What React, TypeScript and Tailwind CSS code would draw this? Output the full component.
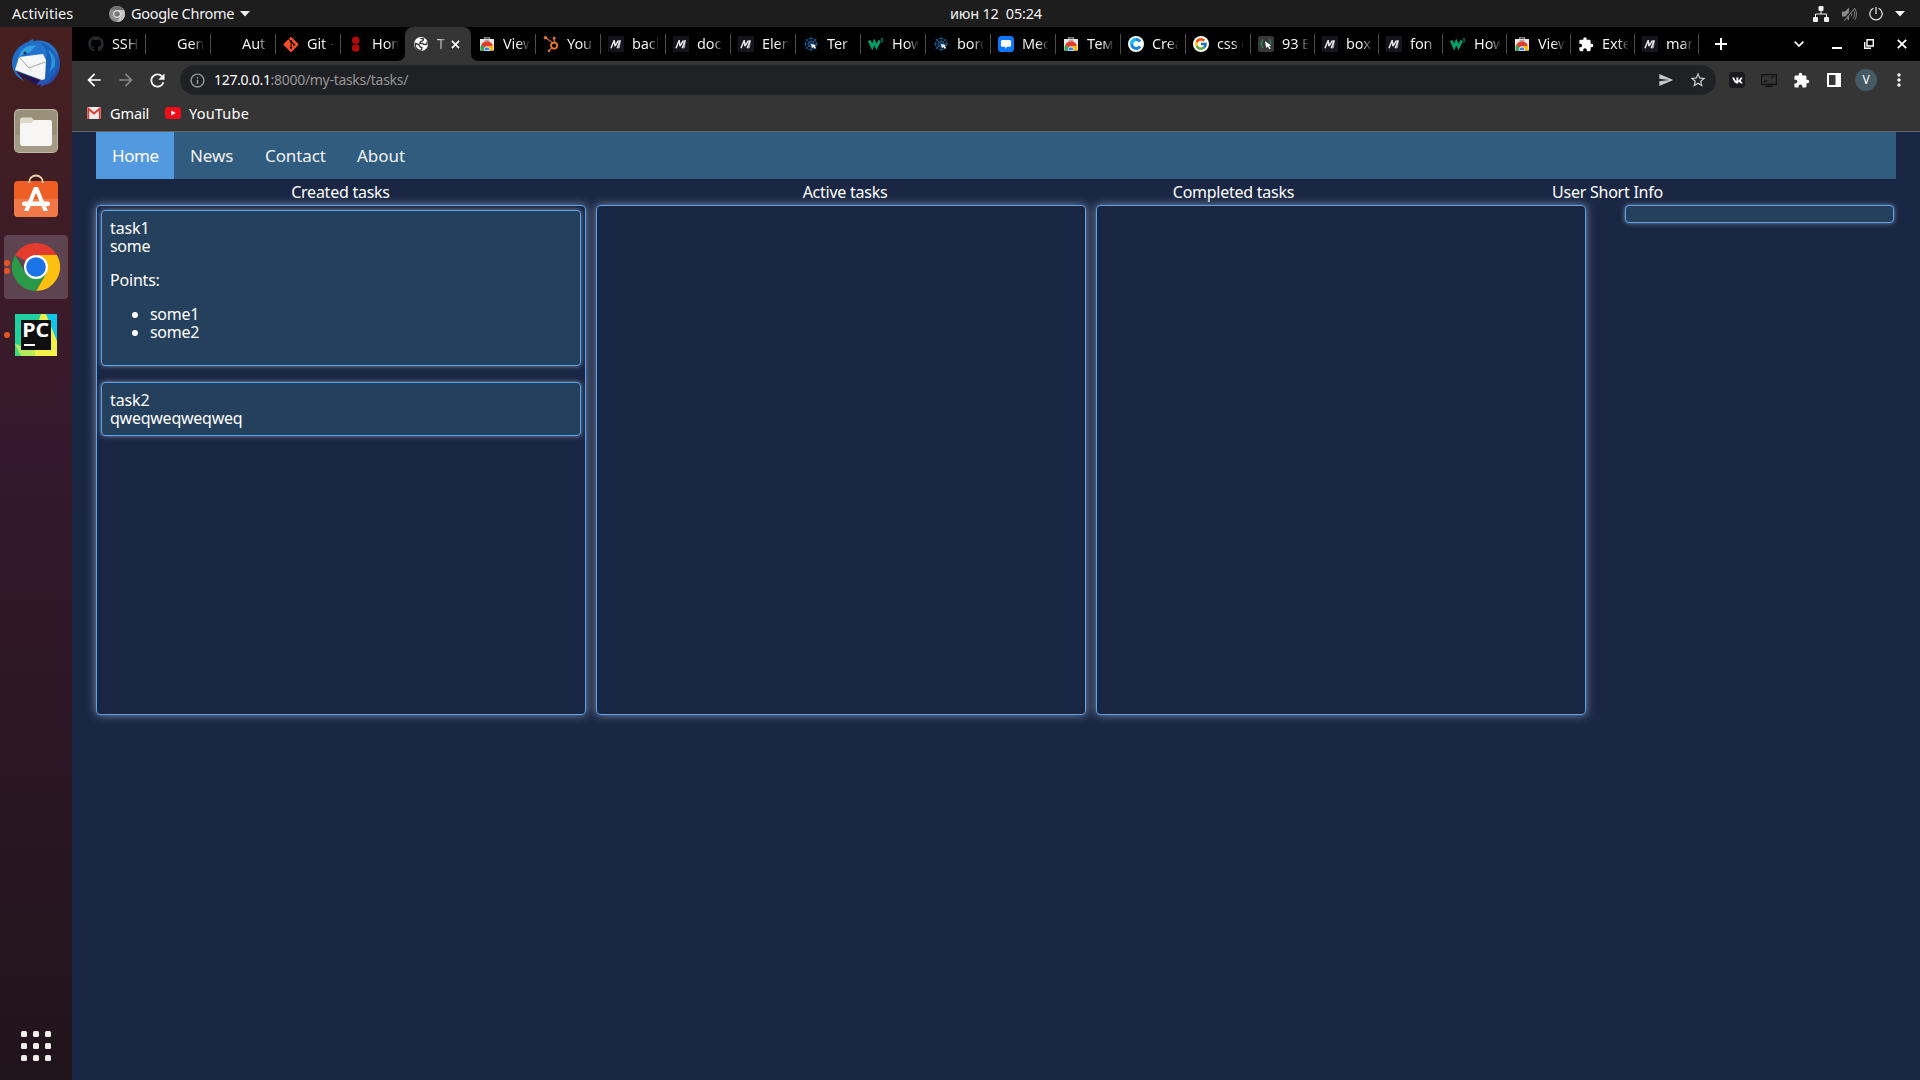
import React from "react";
import { FaGithub, FaGitAlt, FaHubspot, FaVk } from "react-icons/fa";
import { FcGoogle } from "react-icons/fc";
import {
  MdExtension,
  MdSend,
  MdStarBorder,
  MdInfoOutline,
  MdArrowBack,
  MdArrowForward,
  MdRefresh,
  MdMoreVert,
} from "react-icons/md";

const Mdn = () => (
  <svg viewBox="0 0 16 16" className="size-4">
    <rect width="16" height="16" fill="#15141e" />
    <path d="M3 12.300 6.200 4.200 7 10.200 10.300 4.600 M9.200 12.300 12.200 4.200" fill="none" stroke="#e4e4e4" strokeWidth="1.500" strokeLinejoin="bevel" />
    <path d="M10.300 4.200h2.600l-1 8h-2z" fill="#e4e4e4" opacity=".6" />
  </svg>
);

const Globe = () => (
  <svg viewBox="0 0 16 16" className="size-4">
    <circle cx="8" cy="8" r="7" fill="#fff" />
    <path d="M2.300 7.500 6 8.500l1 2.500 2 .5-.5 2.500-2 .3C4 13.500 2 11 2.300 7.500zM7.500 2.300l3 .5-.5 2-2.500.7-.5 1.700 2.500.3 1.500 1 2.800-.2.200-2.500" fill="none" stroke="#353535" strokeWidth="1.300" />
  </svg>
);

const WebStore = () => (
  <svg viewBox="0 0 16 16" className="size-4">
    <path d="M5.5 4V1.8h5V4" fill="none" stroke="#9aa0a0" strokeWidth="1.3" />
    <path d="M1 3h14v11.5H1z" fill="#e9e9e9" />
    <path d="M2 14.5a6 6 0 0 1 1.3-6.8l3 5.2v1.6z" fill="#2da94f" />
    <path d="M14 14.5a6 6 0 0 0-1-6l-5 1v5z" fill="#fdbd00" />
    <path d="M2.6 8.5a6.2 6.2 0 0 1 10.8 0v1.4H8l-3 1.6z" fill="#e33b2e" />
    <path d="M5.3 14.5a2.8 2.8 0 1 1 5.4 0z" fill="#3a7cec" stroke="#fff" strokeWidth=".7" />
    <path d="M5.5 4.3h5" stroke="#999" strokeWidth="1" />
  </svg>
);

const W3 = () => (
  <svg viewBox="0 0 16 16" className="size-4">
    <path d="m1.200 4.500 3 6.500L6.300 6l2.300 5 3-6.500" fill="none" stroke="#04a06c" strokeWidth="2.800" />
    <path d="M12.7 2.800h2.100l-1.200 1.500c2 .1 1.400 2.400-.8 1.700" fill="none" stroke="#04a06c" strokeWidth=".9" />
  </svg>
);

const Wheel = () => (
  <svg viewBox="0 0 16 16" className="size-4">
    <g fill="none" stroke="#1b5a92" strokeWidth=".9">
      <circle cx="8" cy="8" r="5.600" />
      <circle cx="8" cy="8" r="2.800" />
      <path d="M8 .5v15M.5 8h15M2.500 2.500l11 11M13.500 2.500l-11 11" />
    </g>
    <path d="m8 8 5 1-1.200 1 1.200 1.700-1.400 1-1.400-1.600-1.200 1.300z" fill="#f3f7fb" />
  </svg>
);

const Dots = () => (
  <svg viewBox="0 0 16 16" className="size-4">
    <circle cx="7.7" cy="4.200" r="3.800" fill="#ad0a0c" />
    <circle cx="7.7" cy="12" r="3.800" fill="#ad0a0c" />
  </svg>
);

const Chat = () => (
  <svg viewBox="0 0 16 16" className="size-4">
    <rect width="16" height="16" rx="3.6" fill="#0b77ff" />
    <path d="M4.4 4h7.2q1.5 0 1.5 1.5v3.8q0 1.5-1.5 1.5H9L7.2 13v-2.2H4.4q-1.5 0-1.5-1.5V5.5Q2.9 4 4.4 4z" fill="#fff" />
  </svg>
);

const Coursera = () => (
  <svg viewBox="0 0 16 16" className="size-4">
    <circle cx="8" cy="8" r="8" fill="#fff" />
    <path d="M12 10.4A4.500 4.500 0 1 1 12 5.600" fill="none" stroke="#1683f5" strokeWidth="3" />
    <path d="M3.500 8A4.500 4.500 0 0 1 8 3.500" fill="none" stroke="#12c2f1" strokeWidth="3" />
  </svg>
);

const GoogleG = () => (
  <span className="flex size-4 items-center justify-center rounded-full bg-white">
    <FcGoogle size={14} />
  </span>
);

const CssCursor = () => (
  <svg viewBox="0 0 16 16" className="size-4">
    <rect width="16" height="16" rx="2.5" fill="#383838" />
    <path d="M5.4 3.8c-2.6 0-.4 3.2-2.6 4 2.2.8 0 4 2.6 4M10.8 3.8c2.6 0 .4 3.2 2.6 4" fill="none" stroke="#1d9c57" strokeWidth="1.1" />
    <path d="m7 5.2 6.2 4.2-2.2.5 1.8 2.6-1.3.8-1.8-2.7L8.2 12z" fill="#fff" />
  </svg>
);

type Tab = { label: string; icon?: React.ReactNode; active?: boolean };

const tabs: Tab[] = [
  { label: "SSH", icon: <FaGithub size={16} color="#24292e" /> },
  { label: "Gen" },
  { label: "Aut" },
  { label: "Git -", icon: <FaGitAlt size={17} color="#f34f29" /> },
  { label: "Hom", icon: <Dots /> },
  { label: "T", icon: <Globe />, active: true },
  { label: "View", icon: <WebStore /> },
  { label: "You", icon: <FaHubspot size={16} color="#e8762b" /> },
  { label: "back", icon: <Mdn /> },
  { label: "doc", icon: <Mdn /> },
  { label: "Elem", icon: <Mdn /> },
  { label: "Ter", icon: <Wheel /> },
  { label: "How", icon: <W3 /> },
  { label: "bord", icon: <Wheel /> },
  { label: "Мес", icon: <Chat /> },
  { label: "Тем", icon: <WebStore /> },
  { label: "Crea", icon: <Coursera /> },
  { label: "css c", icon: <GoogleG /> },
  { label: "93 B", icon: <CssCursor /> },
  { label: "box", icon: <Mdn /> },
  { label: "fon", icon: <Mdn /> },
  { label: "How", icon: <W3 /> },
  { label: "View", icon: <WebStore /> },
  { label: "Exte", icon: <MdExtension size={17} color="#fff" /> },
  { label: "mar", icon: <Mdn /> },
];

function BrowserTab({ tab, index }: { tab: Tab; index: number }) {
  const width = index > 17 ? "w-16" : "w-[65px]";
  if (tab.active) {
    return (
      <div className="relative flex h-full w-[66px] shrink-0 items-center rounded-t-lg bg-[#353535] pl-2">
        <svg viewBox="0 0 8 8" className="absolute -left-2 bottom-0 size-2"><path d="M8 0v8H0q8 0 8-8" fill="#353535" /></svg>
        <svg viewBox="0 0 8 8" className="absolute -right-2 bottom-0 size-2"><path d="M0 0v8h8Q0 8 0 0" fill="#353535" /></svg>
        <span className="flex w-4 justify-center">{tab.icon}</span>
        <span className="-mt-0.5 ml-2 w-[9px] overflow-hidden whitespace-nowrap bg-gradient-to-r from-[#ddd] from-20% to-[#666] bg-clip-text text-transparent">{tab.label}</span>
        <svg viewBox="0 0 10 10" className="ml-[5px] size-[9px]"><path d="m1 1 8 8M9 1 1 9" stroke="#fff" strokeWidth="1.8" /></svg>
      </div>
    );
  }
  return (
    <div className={`relative flex h-full shrink-0 items-center pl-2 ${index === 6 ? "w-16" : width}`}>
      <span className="flex w-4 shrink-0 justify-center">{tab.icon}</span>
      <span className="-mt-0.5 ml-2 w-[26px] shrink-0 overflow-hidden whitespace-nowrap bg-gradient-to-r from-white from-60% to-[#222] bg-clip-text tracking-[-0.1px] text-transparent">{tab.label}</span>
      {index !== 4 && <span className="-mr-px ml-auto h-5 w-px bg-[#4d4d4d]" />}
    </div>
  );
}

function Dock() {
  return (
    <aside className="flex w-[72px] shrink-0 flex-col items-center bg-gradient-to-b from-[#46201f] via-[#35182d] via-40% to-[#20141b] pt-3">
      <svg viewBox="0 0 48 48" className="size-12 shrink-0">
        <defs>
          <linearGradient id="bird" x1="0" y1="0" x2="1" y2="1">
            <stop offset="0" stopColor="#1d65c4" />
            <stop offset=".55" stopColor="#2878d0" />
            <stop offset="1" stopColor="#2c2c91" />
          </linearGradient>
        </defs>
        <path d="M16 3C20-1 23 0 21 2 36-1 48 9 48 25c0 9-5 17-12 20l-8 3 2-3-6 1 4-5-24-9 8 10C4 38 0 31 0 24 0 14 7 6 16 3z" fill="url(#bird)" />
        <path d="M3 31 7 18l24-3 3 6-1 19-3 1z" fill="#f5f6f8" />
        <path d="m7 18 10 11 16-6" fill="none" stroke="#a2a4a8" strokeWidth="1" />
        <path d="M7 19C8 9 17 5 25 7c-4 1-4 4-7 6s-8 1-11 6z" fill="#35a0e0" />
        <path d="M26 3c8 4 10 10 8 19 0 9 1 15-2 22 10-5 13-11 14-20C46 14 38 5 26 3z" fill="#1762b8" />
        <path d="M35 10c5 6 6 14 2 24l4-5 1 1c3-8 1-15-7-20z" fill="#2c92d8" />
        <path d="m4 32 9 9-3-6 18 7-4 4" fill="#20165c" />
        <circle cx="13" cy="14" r="1.6" fill="#17365c" />
      </svg>
      <svg viewBox="0 0 44 44" className="mt-[22px] size-11 shrink-0">
        <rect width="44" height="44" rx="5" fill="#c0b9a6" />
        <rect x="1" y="1" width="42" height="42" rx="4" fill="#999079" />
        <path d="M1 26h42v13q0 4-4 4H5q-4 0-4-4z" fill="#a49b86" />
        <path d="M6 15v-4q0-2.5 2.5-2.5h9L22 13v5H6z" fill="#dedacb" />
        <path d="M6 16q0-2 2-2h9.500l3-3H36q2 0 2 2v21q0 3-3 3H9q-3 0-3-3z" fill="#f7f6f4" />
      </svg>
      <svg viewBox="0 0 44 44" className="mt-5 size-11 shrink-0">
        <rect y="8" width="44" height="36" rx="4" fill="#ef5f25" />
        <path d="M0 26h44v14q0 4-4 4H4q-4 0-4-4z" fill="#f2784a" />
        <path d="M15 10c0-10 14-10 14 0" fill="none" stroke="#f4d3a4" strokeWidth="1.8" />
        <path d="M20 14h4l10 24h-4.500L22 20l-7.500 18H10z" fill="#fff" />
        <rect x="8" y="28.500" width="28" height="4.500" rx="2" fill="#fff" />
      </svg>
      <div className="relative mt-[18px] flex size-16 shrink-0 items-center justify-center rounded bg-[#5e4351]">
        <span className="absolute left-0 top-[25px] size-[6px] rounded-full bg-[#e95420]" />
        <span className="absolute left-0 top-[33px] size-[6px] rounded-full bg-[#e95420]" />
        <svg viewBox="0 0 48 48" className="size-12">
          <path d="M24 24 3.200 12A24 24 0 0 1 44.800 12z" fill="#e33b2e" />
          <path d="M44.800 12A24 24 0 0 1 24 48l10.400-18L24 12z" fill="#fdc00f" />
          <path d="M3.200 12A24 24 0 0 0 24 48l10.400-18-10.400 4-10.400-4z" fill="#2a9a48" />
          <circle cx="24" cy="24" r="12" fill="#fff" />
          <circle cx="24" cy="24" r="9.800" fill="#1b73e8" />
        </svg>
      </div>
      <div className="relative mt-[15px] flex h-[42px] w-full shrink-0 justify-center">
        <span className="absolute left-1 top-[18px] size-[6px] rounded-full bg-[#e95420]" />
        <svg viewBox="0 0 42 42" className="size-[42px]">
          <rect width="42" height="42" fill="#22d589" />
          <path d="M0 0h26L6 20 0 30z" fill="#1fd0a0" />
          <path d="M28 0h14v28L32 14z" fill="#0cc7e8" />
          <path d="M26 0h5l11 27v15H12z" fill="#f4f04a" />
          <path d="M0 28 8 42H0z" fill="#3ddb84" />
          <path d="M0 30 20 36v6H6z" fill="#b9e85a" />
          <rect x="6" y="6" width="30" height="30" fill="#0f0f0f" />
          <rect x="9" y="30" width="11" height="2" fill="#fff" />
          <text x="7.300" y="22.500" fill="#fff" fontFamily="Noto Sans, sans-serif" fontWeight="700" fontSize="19" textLength="27" lengthAdjust="spacingAndGlyphs">PC</text>
        </svg>
      </div>
      <div className="mb-[19px] mt-auto grid grid-cols-3 gap-[6px]">
        {Array.from({ length: 9 }, (_, i) => (
          <span key={i} className="size-[6px] rounded-[1.5px] bg-[#f0efeb]" />
        ))}
      </div>
    </aside>
  );
}

function TopBar() {
  return (
    <header className="grid h-[27px] shrink-0 grid-cols-[1fr_auto_1fr] items-center bg-[#1d1d1d] text-[14.5px] leading-none text-[#f2f2f2]">
      <div className="flex items-center pl-3">
        <span className="w-[97px] tracking-[0.1px]">Activities</span>
        <svg viewBox="0 0 16 16" className="size-4">
          <circle cx="8" cy="8" r="8" fill="#8d8d8d" />
          <path d="M8 4h7A8 8 0 0 1 8 16l3.500-6z" fill="#c4c4c4" />
          <path d="M1 4a8 8 0 0 1 14 0H8z" fill="#727272" />
          <circle cx="8" cy="8" r="3.800" fill="#eee" />
          <circle cx="8" cy="8" r="2.800" fill="#777" />
        </svg>
        <span className="ml-[6px] w-[105px] whitespace-nowrap tracking-[-0.3px]">Google Chrome</span>
        <svg viewBox="0 0 10 6" className="ml-1 h-[6px] w-[10px]"><path d="M0 0h10L5 5.500z" fill="#f2f2f2" /></svg>
      </div>
      <span className="-mt-px translate-x-[36px] whitespace-pre tracking-[-0.2px]">июн 12  05:24</span>
      <div className="flex items-center justify-end gap-[12px] pr-[15px]">
        <svg viewBox="0 0 16 16" className="size-4" fill="#f2f2f2">
          <rect x="5.500" y="0" width="5" height="5" rx="1" />
          <rect x="0" y="11" width="5" height="5" rx="1" />
          <rect x="11" y="11" width="5" height="5" rx="1" />
          <path d="M2.500 11V8h11v3M8 5v3" fill="none" stroke="#f2f2f2" />
        </svg>
        <svg viewBox="0 0 16 16" className="size-4" fill="#8a8a8a">
          <path d="M1 5.500h3L8 1.500v13l-4-4H1z" />
          <path d="M10 5.500q2 2.500 0 5M12 3.500q3.500 4.500 0 9M13.500 2q4 6 .2 12" fill="none" stroke="#777" />
          <path d="M2 15 14 1" stroke="#1d1d1d" strokeWidth="2" />
          <path d="M3 15 14 2" stroke="#8a8a8a" />
        </svg>
        <svg viewBox="0 0 16 16" className="size-[14px]" fill="none" stroke="#e6e6e6" strokeWidth="1.400">
          <path d="M8 0v8M5 1.500a7 7 0 1 0 6 0" />
        </svg>
        <svg viewBox="0 0 10 6" className="h-[6px] w-[10px]"><path d="M0 0h10L5 5.500z" fill="#f2f2f2" /></svg>
      </div>
    </header>
  );
}

function Browser() {
  return (
    <div className="flex h-[105px] shrink-0 flex-col border-b border-[#676767] bg-[#353535] text-white">
      <div className="flex h-[34px] items-center bg-black pl-2 text-[14.5px] leading-5">
        {tabs.map((t, i) => <BrowserTab key={i} tab={t} index={i} />)}
        <svg viewBox="0 0 12 12" className="ml-[17px] size-3"><path d="M6 0v12M0 6h12" stroke="#fff" strokeWidth="2" /></svg>
        <div className="ml-auto flex items-center pr-[13px]">
          <svg viewBox="0 0 10 6" className="mr-[28px] h-[6px] w-[10px]"><path d="m.7.7 4.300 4.300L9.300.7" fill="none" stroke="#fff" strokeWidth="1.700" /></svg>
          <svg viewBox="0 0 10 10" className="mr-[22px] size-[10px]"><path d="M0 9h10" stroke="#fff" strokeWidth="2" /></svg>
          <svg viewBox="0 0 10 10" className="mr-[23px] size-[10px]" fill="none" stroke="#fff" strokeWidth="1.400"><path d="M3 .7h6.300V7H3z M.7 3v6.300H7" /></svg>
          <svg viewBox="0 0 10 10" className="size-[10px]"><path d="m.8.800 8.400 8.400M9.200.8.800 9.200" stroke="#fff" strokeWidth="1.800" /></svg>
        </div>
      </div>
      <div className="flex h-[38px] items-center pl-3">
        <MdArrowBack size={20} />
        <MdArrowForward size={20} color="#858585" className="ml-3" />
        <MdRefresh size={21} className="ml-[11px]" />
        <div className="ml-3 flex h-[30px] w-[1536px] items-center rounded-full bg-[#202124] pl-[9px] pr-[9px]">
          <MdInfoOutline size={17} color="#9a9a9a" />
          <span className="-mt-0.5 ml-[8px] text-[14px] tracking-[-0.3px] text-[#969696]"><span className="text-white">127.0.0.1</span>:8000/my-tasks/tasks/</span>
          <MdSend size={16} color="#c8c8c8" className="ml-auto" />
          <MdStarBorder size={18} color="#d0d0d0" className="ml-[15px]" />
        </div>
        <div className="ml-auto flex items-center pr-[11px]">
          <span className="flex h-4 w-4 items-center justify-center rounded-[3px] bg-[#1b1b1f]"><FaVk size={11} /></span>
          <svg viewBox="0 0 16 16" className="ml-4 size-4" fill="none" stroke="#111" strokeWidth="1.200">
            <path d="M.6 2.600h14.800v9.800H.600zM4 14.500h8M3 10l3-2M10 6l3-2M5 14h6" />
          </svg>
          <MdExtension size={17} className="ml-4" />
          <svg viewBox="0 0 14 14" className="ml-[17px] size-[14px]"><path d="M0 0h14v14H0z" fill="#fff" /><path d="M2 2h6.500v10H2z" fill="#353535" /></svg>
          <span className="ml-[14px] flex size-[22px] items-center justify-center rounded-full bg-[#455a64] text-[12px]">V</span>
          <MdMoreVert size={20} className="ml-3" />
        </div>
      </div>
      <div className="flex items-center pl-[15px] pt-1 text-[14.5px] leading-5">
        <svg viewBox="0 0 14 12" className="h-3 w-[14px]">
          <rect width="14" height="12" rx="1" fill="#eceaea" />
          <path d="M1.200 12V1.500L7 6.500l5.800-5V12" fill="none" stroke="#d9392e" strokeWidth="1.800" />
        </svg>
        <span className="ml-[9px] w-[39px] tracking-[-0.1px]">Gmail</span>
        <svg viewBox="0 0 16 12" className="ml-4 h-3 w-4">
          <rect width="16" height="12" rx="3" fill="#f00d17" />
          <path d="M6.300 3.500v5l4.400-2.500z" fill="#fff" />
        </svg>
        <span className="ml-2 tracking-[0.2px]">YouTube</span>
      </div>
    </div>
  );
}

const board = "h-[510px] w-[490px] rounded-[4px] border border-[#5ba4f5] p-1 shadow-[0_0_10px_#7d8ba4]";
const card = "rounded-[4px] border border-[#5ba4f5] bg-[#25405d] p-2 shadow-[0_0_5px_#7d8ba4]";

function TasksPage() {
  return (
    <main className="flex-1 bg-[#1a2744] px-6 text-[16px] leading-[18px] text-white">
      <nav className="flex h-[47px] items-center bg-[#305c7f] text-[17px] text-[#f2f2f2]">
        <a className="flex h-full w-[78px] items-center bg-[#5399e0] pl-4 tracking-[-0.4px] text-white">Home</a>
        <a className="w-[75px] pl-4 tracking-[-0.1px]">News</a>
        <a className="w-[92px] pl-4 tracking-[-0.1px]">Contact</a>
        <a className="pl-4">About</a>
      </nav>
      <div className="flex h-[26px] items-center whitespace-nowrap text-center tracking-[-0.25px]">
        <div className="w-[489px]">Created tasks</div>
        <div className="w-[520px]">Active tasks</div>
        <div className="w-[257px]">Completed tasks</div>
        <div className="w-[491px]">User Short Info</div>
      </div>
      <div className="flex items-start gap-[10px] tracking-[-0.3px]">
        <section className={board}>
          <article className={card}>
            <p className="tracking-[-0.1px]">task1</p>
            <p>some</p>
            <p className="my-4 tracking-[-0.2px]">Points:</p>
            <ul className="mb-4 list-disc pl-10">
              <li>some1</li>
              <li>some2</li>
            </ul>
          </article>
          <article className={`mt-4 ${card}`}>
            <p className="tracking-[-0.1px]">task2</p>
            <p className="tracking-[-0.25px]">qweqweqweqweq</p>
          </article>
        </section>
        <section className={board} />
        <section className={board} />
        <section className={`ml-[29px] w-[269px] ${card}`} />
      </div>
    </main>
  );
}

export default function App() {
  return (
    <div className="flex h-[1080px] w-[1920px] flex-col overflow-hidden font-['Noto_Sans',sans-serif]">
      <TopBar />
      <div className="flex min-h-0 flex-1">
        <Dock />
        <div className="flex w-[1848px] flex-col">
          <Browser />
          <TasksPage />
        </div>
      </div>
    </div>
  );
}
